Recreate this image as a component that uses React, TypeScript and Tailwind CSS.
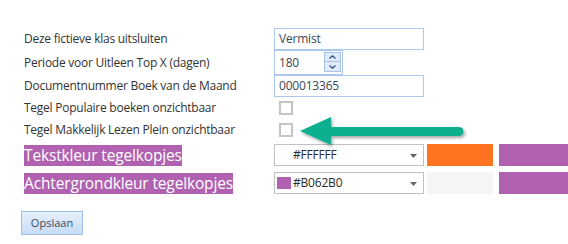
import React from 'react';

const FONT = "font-['Segoe_UI','Open_Sans','Noto_Sans',sans-serif]";

function Label({ children }: { children: React.ReactNode }) {
  return <div className="w-[274px] shrink-0 pl-[24px] text-[12px] tracking-[-0.25px] text-[#333] whitespace-nowrap">{children}</div>;
}

function Checkbox() {
  return <div className="ml-[5px] w-[14px] h-[14px] border-2 border-[#c4c4c4] bg-white" />;
}

function Caret() {
  return (
    <svg width="7" height="4" viewBox="0 0 7 4" className="absolute right-[6px] top-[9px]">
      <path d="M0 0 L7 0 L3.5 4 Z" fill="#666" />
    </svg>
  );
}

function ColorSelect({ swatch, value }: { swatch: string; value: string }) {
  return (
    <div className="relative shrink-0 w-[150px] h-[22px] border border-[#c2c2c2] bg-white flex items-center">
      <div className="ml-[2px] w-[14px] h-[12px]" style={{ background: swatch }} />
      <span className="ml-[2px] text-[12px] tracking-[-0.2px] text-[#2b2b2b]">{value}</span>
      <Caret />
    </div>
  );
}

const inputText = 'text-[12px] tracking-[-0.2px] text-[#3b4556]';
const purpleLabel = 'inline-block h-[21px] leading-[21px] bg-[#B062B0] text-white text-[15.5px] tracking-[-0.15px] whitespace-nowrap';

export default function App() {
  return (
    <div className={`relative w-[568px] h-[244px] bg-white overflow-hidden ${FONT}`}>
      <div className="flex flex-col pt-[28px]">
        <div className="flex items-center h-[22px]">
          <Label>Deze fictieve klas uitsluiten</Label>
          <div className={`shrink-0 w-[150px] h-[22px] border border-[#abc8ee] flex items-center pl-[4px] ${inputText}`}>Vermist</div>
        </div>

        <div className="flex items-center h-[25px]">
          <Label>Periode voor Uitleen Top X (dagen)</Label>
          <div className={`relative shrink-0 w-[69px] h-[25px] border border-[#abc8ee] flex items-center pl-[4px] ${inputText}`}>
            180
            <div className="absolute right-[1px] top-[1px] flex flex-col">
              <div className="w-[17px] h-[10px] bg-[#dfeafa] border border-[#a9c4e8] flex items-center justify-center">
                <svg width="7" height="4" viewBox="0 0 7 4"><path d="M0.5 3.5 L3.5 0.8 L6.5 3.5" stroke="#2c4e7c" strokeWidth="1.2" fill="none" /></svg>
              </div>
              <div className="w-[17px] h-[10px] bg-[#dfeafa] border border-t-0 border-[#a9c4e8] flex items-center justify-center">
                <svg width="7" height="4" viewBox="0 0 7 4"><path d="M0.5 0.5 L3.5 3.2 L6.5 0.5" stroke="#2c4e7c" strokeWidth="1.2" fill="none" /></svg>
              </div>
            </div>
          </div>
        </div>

        <div className="flex items-center h-[22px]">
          <Label>Documentnummer Boek van de Maand</Label>
          <div className={`shrink-0 w-[150px] h-[22px] border border-[#abc8ee] flex items-center pl-[4px] ${inputText}`}>000013365</div>
        </div>

        <div className="flex items-center h-[22px]">
          <Label>Tegel Populaire boeken onzichtbaar</Label>
          <Checkbox />
        </div>

        <div className="flex items-center h-[22px]">
          <Label>Tegel Makkelijk Lezen Plein onzichtbaar</Label>
          <Checkbox />
        </div>

        <div className="flex items-center h-[22px] mt-[3px]">
          <div className="w-[274px] shrink-0 pl-[24px]">
            <span className={purpleLabel}>Tekstkleur tegelkopjes</span>
          </div>
          <ColorSelect swatch="#FFFFFF" value="#FFFFFF" />
          <div className="shrink-0 ml-[3px] w-[66px] h-[22px] bg-[#fd7320]" />
          <div className="shrink-0 ml-[6px] w-[80px] h-[22px] bg-[#B062B0]" />
        </div>

        <div className="flex items-center h-[22px] mt-[6px]">
          <div className="w-[274px] shrink-0 pl-[24px]">
            <span className={purpleLabel}>Achtergrondkleur tegelkopjes</span>
          </div>
          <ColorSelect swatch="#B062B0" value="#B062B0" />
          <div className="shrink-0 ml-[3px] w-[66px] h-[22px] bg-[#f5f5f5]" />
          <div className="shrink-0 ml-[6px] w-[80px] h-[22px] bg-[#B062B0]" />
        </div>

        <div className="pl-[21px] mt-[15px]">
          <button className="w-[62px] h-[24px] border border-[#9ebfe6] bg-gradient-to-b from-[#e6f0fd] to-[#c7dcf6] text-[11px] text-[#3a4a60]">Opslaan</button>
        </div>
      </div>

      <svg className="absolute left-[296px] top-[110px]" width="180" height="44" viewBox="0 0 180 44">
        <defs>
          <filter id="sh" x="-10%" y="-30%" width="130%" height="180%">
            <feDropShadow dx="1.5" dy="2" stdDeviation="1.8" floodColor="#000" floodOpacity="0.35" />
          </filter>
        </defs>
        <g filter="url(#sh)" fill="#0aaf8e">
          <path d="M4 21 L35 7 L35 35 Z" />
          <line x1="33" y1="21.5" x2="163" y2="21.5" stroke="#0aaf8e" strokeWidth="9" strokeLinecap="round" />
        </g>
      </svg>
    </div>
  );
}
